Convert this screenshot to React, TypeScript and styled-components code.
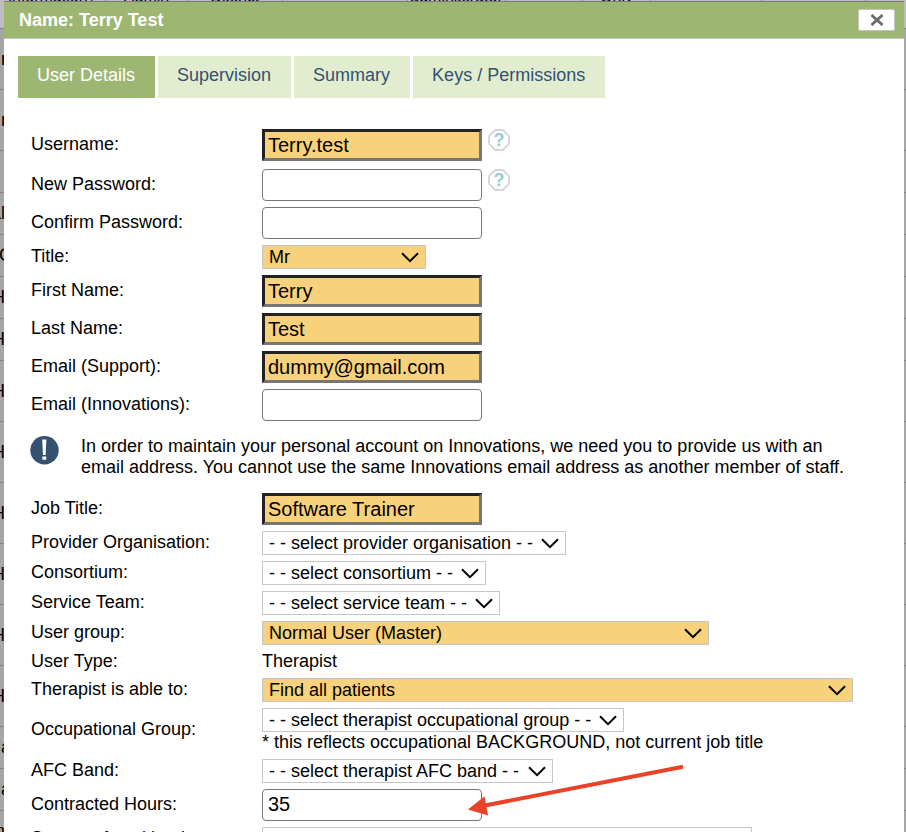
import React from "react";
import styled, { createGlobalStyle } from "styled-components";

const GlobalStyle = createGlobalStyle`
  *, *::before, *::after { box-sizing: border-box; }
  body {
    margin: 0;
    background: #a6a6a6;
    color: #000;
    font: 18px/21px "Liberation Sans", Arial, sans-serif;
  }
`;

const Screen = styled.div`
  position: relative;
  height: 100vh;
  overflow: hidden;
`;

const Backdrop = styled.div`
  position: absolute;
  inset: 0;
  overflow: hidden;
  background: #a6a6a6;
`;

const HeadRow = styled.div`
  display: flex;
  height: 41px;
  margin-top: -12px;
  background: #bdbdbd;
  border-bottom: 1px solid #858585;
  font-size: 16px;
  line-height: 18px;
`;

const HeadCell = styled.div<{ $width: number }>`
  flex: 0 0 ${(p) => p.$width}px;
  border-right: 1px solid #8f8f8f;
  text-align: center;
  white-space: nowrap;
  overflow: hidden;
`;

const BackRow = styled.div<{ $height: number }>`
  display: flex;
  align-items: center;
  height: ${(p) => p.$height}px;
  border-bottom: 1px solid #858585;
`;

const BackCell = styled.div<{ $width: number }>`
  display: flex;
  justify-content: flex-end;
  width: ${(p) => p.$width}px;
  white-space: nowrap;
`;

const Dialog = styled.section`
  position: relative;
  min-height: 100%;
  margin: 1px 2px 0 4px;
  background: #fff;
  border-top: 1px solid #7b7b7b;
`;

const TitleBar = styled.header`
  display: flex;
  align-items: center;
  justify-content: space-between;
  height: 37px;
  padding: 0 9px 0 15px;
  background: #9db772;
  border-bottom: 1px solid #c6c6c6;
`;

const DialogTitle = styled.h1`
  margin: 0;
  color: #fff;
  font-size: 18px;
  line-height: 21px;
  font-weight: bold;
`;

const CloseButton = styled.button`
  display: flex;
  align-items: center;
  justify-content: center;
  width: 37px;
  height: 22px;
  padding: 0;
  background: #fff;
  border: 1px solid #c4c4c4;
  border-radius: 2px;
`;

const Tabs = styled.nav`
  display: flex;
  gap: 3px;
  padding: 17px 14px 0;
`;

const Tab = styled.button<{ $active?: boolean }>`
  height: 42px;
  padding: 0 20px 4px 19px;
  border: 0;
  background: ${(p) => (p.$active ? "#9db772" : "#e2edd0")};
  color: ${(p) => (p.$active ? "#fff" : "#34516f")};
  font: inherit;
  white-space: nowrap;
`;

const Form = styled.form`
  display: flex;
  flex-direction: column;
  gap: 6px;
  padding: 31px 27px 0;
`;

const Row = styled.div<{ $spaced?: boolean }>`
  display: grid;
  grid-template-columns: 231px minmax(0, 1fr);
  align-items: center;
  margin-bottom: ${(p) => (p.$spaced ? 2 : 0)}px;
`;

const Label = styled.label`
  padding-bottom: 2px;
`;

const Field = styled.div`
  position: relative;
  display: flex;
  align-items: flex-start;
  gap: 6px;
`;

const Stack = styled.div`
  display: flex;
  flex-direction: column;
  align-items: flex-start;
`;

const TextInput = styled.input<{ $required?: boolean }>`
  width: 220px;
  height: 32px;
  font: 20px/24px "Liberation Sans", Arial, sans-serif;
  color: #000;
  ${(p) =>
    p.$required
      ? `padding: 0 3px;
         background: #f8d17c;
         border: 3px solid;
         border-color: #222 #767676 #767676 #222;
         border-radius: 0;`
      : `padding: 0 5px 1px;
         background: #fff;
         border: 1px solid #767676;
         border-radius: 4px;`}
`;

const SelectWrap = styled.div<{ $width?: number }>`
  position: relative;
  width: ${(p) => (p.$width ? `${p.$width}px` : "auto")};
  max-width: 100%;
`;

const NativeSelect = styled.select<{ $required?: boolean }>`
  display: block;
  width: 100%;
  height: 24px;
  padding: 1px 31px 0 6px;
  appearance: none;
  background: ${(p) => (p.$required ? "#f8d17c" : "#fff")};
  border: 1px solid #c6c6c6;
  border-radius: 0;
  color: #000;
  font: 18px/21px "Liberation Sans", Arial, sans-serif;
`;

const Chevron = styled.svg`
  position: absolute;
  top: 7px;
  right: 7px;
  pointer-events: none;
`;

const HelpButton = styled.button`
  display: block;
  width: 22px;
  height: 22px;
  padding: 0;
  background: none;
  border: 0;
  font: bold 18px/22px "Liberation Sans", Arial, sans-serif;
`;

const Notice = styled.div`
  display: grid;
  grid-template-columns: 50px minmax(0, 1fr);
  margin: 9px 0;
  padding-right: 28px;
`;

const NoticeText = styled.p`
  margin: 0;
`;

const NoticeIcon = styled.svg`
  margin-left: -1px;
`;

const Arrow = styled.svg`
  position: absolute;
  left: 205px;
  top: -25px;
  pointer-events: none;
`;

function Help() {
  return (
    <HelpButton type="button" aria-label="Help">
      <svg width="22" height="22" viewBox="0 0 22 22" aria-hidden="true">
        <path
          d="M7.2 1h7.6L21 7.2v7.6L14.8 21H7.2L1 14.8V7.2z"
          fill="#fff"
          stroke="#d6d6d6"
          strokeWidth="1.8"
          strokeLinejoin="round"
        />
        <text x="11" y="17" textAnchor="middle" fill="#93cddd">?</text>
      </svg>
    </HelpButton>
  );
}

type SelectProps = { id: string; value: string; width?: number; required?: boolean };

function Select({ id, value, width, required }: SelectProps) {
  return (
    <SelectWrap $width={width}>
      <NativeSelect id={id} $required={required} defaultValue={value}>
        <option>{value}</option>
      </NativeSelect>
      <Chevron width="18" height="11" viewBox="0 0 18 11" aria-hidden="true">
        <path d="M1 1.2 9 9.2 17 1.2" fill="none" stroke="#000" strokeWidth="2" />
      </Chevron>
    </SelectWrap>
  );
}

type FormRowProps = { id: string; label: string; spaced?: boolean; children: React.ReactNode };

function FormRow({ id, label, spaced, children }: FormRowProps) {
  return (
    <Row $spaced={spaced}>
      <Label htmlFor={id}>{label}</Label>
      <Field>{children}</Field>
    </Row>
  );
}

const headCells: [string, number][] = [
  ["information?", 106],
  ["Admin", 82],
  ["District", 95],
  ["", 125],
  ["administrator", 98],
  ["", 77],
  ["Only", 68],
  ["", 111],
  ["", 104],
];

const backRows: [string, number, number][] = [
  ["r", 61, 7],
  ["r", 61, 7],
  ["", 42, 5],
  ["al", 42, 5],
  ["C", 42, 12],
  ["H", 42, 5],
  ["H", 42, 5],
  ["H", 61, 5],
  ["H", 61, 5],
  ["H", 61, 5],
  ["H", 61, 5],
  ["H", 61, 5],
  ["H", 61, 5],
  ["Ja", 42, 11],
  ["Ja", 42, 11],
  ["n", 42, 5],
];

const tabs = ["User Details", "Supervision", "Summary", "Keys / Permissions"];

export default function App() {
  return (
    <Screen>
      <GlobalStyle />
      <Backdrop aria-hidden="true">
        <HeadRow>
          {headCells.map(([text, width], i) => (
            <HeadCell key={i} $width={width}>{text}</HeadCell>
          ))}
        </HeadRow>
        {backRows.map(([text, height, width], i) => (
          <BackRow key={i} $height={height}>
            <BackCell $width={width}>{text}</BackCell>
          </BackRow>
        ))}
      </Backdrop>
      <Dialog role="dialog" aria-labelledby="dialog-title">
        <TitleBar>
          <DialogTitle id="dialog-title">Name: Terry Test</DialogTitle>
          <CloseButton type="button" aria-label="Close">
            <svg width="14" height="14" viewBox="0 0 14 14" aria-hidden="true">
              <path d="M1.5 2 12.5 12M12.5 2 1.5 12" stroke="#6c6c6c" strokeWidth="3" />
            </svg>
          </CloseButton>
        </TitleBar>
        <Tabs>
          {tabs.map((tab, i) => (
            <Tab key={tab} type="button" $active={i === 0}>{tab}</Tab>
          ))}
        </Tabs>
        <Form>
          <FormRow id="username" label="Username:" spaced>
            <TextInput id="username" $required defaultValue="Terry.test" />
            <Help />
          </FormRow>
          <FormRow id="new-password" label="New Password:">
            <TextInput id="new-password" type="password" />
            <Help />
          </FormRow>
          <FormRow id="confirm-password" label="Confirm Password:">
            <TextInput id="confirm-password" type="password" />
          </FormRow>
          <FormRow id="title" label="Title:">
            <Select id="title" value="Mr" width={164} required />
          </FormRow>
          <FormRow id="first-name" label="First Name:">
            <TextInput id="first-name" $required defaultValue="Terry" />
          </FormRow>
          <FormRow id="last-name" label="Last Name:">
            <TextInput id="last-name" $required defaultValue="Test" />
          </FormRow>
          <FormRow id="email-support" label="Email (Support):">
            <TextInput id="email-support" $required defaultValue="dummy@gmail.com" />
          </FormRow>
          <FormRow id="email-innovations" label="Email (Innovations):">
            <TextInput id="email-innovations" />
          </FormRow>
          <Notice>
            <NoticeIcon width="29" height="29" viewBox="0 0 29 29" aria-hidden="true">
              <circle cx="14.5" cy="14.2" r="14.2" fill="#34516f" />
              <path d="M12.2 3.5h4.2l-.8 15.5h-2.6zM12.4 20.5h3.8v3.3h-3.8z" fill="#fff" />
            </NoticeIcon>
            <NoticeText>
              In order to maintain your personal account on Innovations, we need you to provide us with an
              email address. You cannot use the same Innovations email address as another member of staff.
            </NoticeText>
          </Notice>
          <FormRow id="job-title" label="Job Title:">
            <TextInput id="job-title" $required defaultValue="Software Trainer" />
          </FormRow>
          <FormRow id="provider" label="Provider Organisation:">
            <Select id="provider" value="- - select provider organisation - -" />
          </FormRow>
          <FormRow id="consortium" label="Consortium:">
            <Select id="consortium" value="- - select consortium - -" />
          </FormRow>
          <FormRow id="service-team" label="Service Team:">
            <Select id="service-team" value="- - select service team - -" />
          </FormRow>
          <FormRow id="user-group" label="User group:">
            <Select id="user-group" value="Normal User (Master)" width={447} required />
          </FormRow>
          <Row>
            <span>User Type:</span>
            <span>Therapist</span>
          </Row>
          <FormRow id="able-to" label="Therapist is able to:">
            <Select id="able-to" value="Find all patients" width={591} required />
          </FormRow>
          <FormRow id="occupational-group" label="Occupational Group:">
            <Stack>
              <Select id="occupational-group" value="- - select therapist occupational group - -" />
              <span>* this reflects occupational BACKGROUND, not current job title</span>
            </Stack>
          </FormRow>
          <FormRow id="afc-band" label="AFC Band:">
            <Select id="afc-band" value="- - select therapist AFC band - -" />
          </FormRow>
          <FormRow id="hours" label="Contracted Hours:">
            <TextInput id="hours" defaultValue="35" />
            <Arrow width="218" height="54" viewBox="0 0 218 54" aria-hidden="true">
              <path d="M18 41.5 216 2.8" stroke="#ea4228" strokeWidth="4" />
              <path d="M1 45.5 17.5 32.3 21 51.5z" fill="#ea4228" />
            </Arrow>
          </FormRow>
          <FormRow id="source" label="Source of workload:">
            <Select id="source" value="- - source of workload - -" width={490} />
          </FormRow>
        </Form>
      </Dialog>
    </Screen>
  );
}
